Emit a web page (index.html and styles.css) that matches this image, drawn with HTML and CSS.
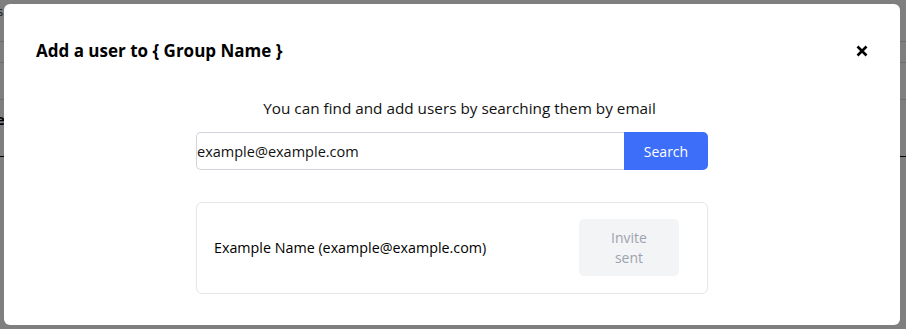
FILE: index.html
```html
<!DOCTYPE html>
<html lang="en">
<head>
<meta charset="utf-8">
<title>Add a user</title>
<link rel="stylesheet" href="styles.css">
</head>
<body>
<div class="page">
  <div class="page-top"><span class="crumb">s</span></div>
  <div class="page-row r1"></div>
  <div class="page-row r2"></div>
  <div class="page-row r3"><span class="cell-label">e</span></div>
  <div class="page-row r4"></div>
</div>
<div class="overlay">
  <div class="modal" role="dialog">
    <div class="modal-header">
      <h2 class="modal-title">Add a user to { Group Name }</h2>
      <button class="close-btn" aria-label="Close">
        <svg width="12" height="12" viewBox="0 0 12 12"><path d="M1.5 1.5 L10.5 10.5 M10.5 1.5 L1.5 10.5" stroke="#000" stroke-width="2.6" stroke-linecap="butt" fill="none"/></svg>
      </button>
    </div>
    <div class="modal-body">
      <p class="hint">You can find and add users by searching them by email</p>
      <div class="search-row">
        <input class="search-input" type="text" value="example@example.com">
        <button class="search-btn">Search</button>
      </div>
      <div class="result-card">
        <span class="result-name">Example Name (example@example.com)</span>
        <button class="invite-btn" disabled>Invite<br>sent</button>
      </div>
    </div>
  </div>
</div>
</body>
</html>
```

FILE: styles.css
```css
html, body {
  margin: 0;
  padding: 0;
  height: 100%;
}
body {
  font-family: "Open Sans", "Noto Sans", sans-serif;
  background: #ffffff;
  overflow: hidden;
}
.page {
  display: flex;
  flex-direction: column;
}
.page-top {
  height: 41px;
  border-bottom: 1px solid #d8d8d8;
  font-size: 13px;
  color: #333;
}
.crumb {
  display: block;
  margin-left: -3px;
  margin-top: 2px;
}
.page-row {
  border-bottom: 1px solid #d8d8d8;
}
.r1 { height: 20px; }
.r2 { height: 36px; }
.r3 {
  height: 56px;
  border-bottom: 1px solid #000;
  font-weight: 700;
  font-size: 15px;
  display: flex;
  align-items: center;
}
.cell-label {
  margin-left: -4px;
  color: #000;
  margin-top: -18px;
}
.r4 { height: 160px; border-bottom: none; }

.overlay {
  position: fixed;
  inset: 0;
  background: rgba(0, 0, 0, 0.5);
  padding: 4px;
}
.modal {
  background: #fff;
  border-radius: 6px;
  width: 896px;
  height: 321px;
  display: flex;
  flex-direction: column;
}
.modal-header {
  display: flex;
  align-items: center;
  justify-content: space-between;
  padding: 33px 32px 0 32px;
}
.modal-title {
  margin: 0;
  font-size: 17px;
  line-height: 28px;
  font-weight: 700;
  color: #000;
}
.close-btn {
  background: none;
  border: 0;
  padding: 0;
  width: 12px;
  height: 12px;
  display: flex;
  cursor: pointer;
}
.modal-body {
  width: 512px;
  margin: 31px auto 0;
  display: flex;
  flex-direction: column;
}
.hint {
  margin: 0 0 12px;
  text-align: center;
  font-size: 15.3px;
  line-height: 24px;
  color: #111;
  padding-left: 15px;
}
.search-row {
  display: flex;
  height: 38px;
}
.search-input {
  flex: 1;
  min-width: 0;
  border: 1px solid #d1d5db;
  border-right: 0;
  border-radius: 5px 0 0 5px;
  padding: 0;
  font-family: inherit;
  font-size: 14.5px;
  color: #111;
  outline: none;
}
.search-btn {
  width: 84px;
  border: 0;
  background: #3d6ef9;
  color: #fff;
  font-family: inherit;
  font-size: 14px;
  border-radius: 0 5px 5px 0;
}
.result-card {
  margin-top: 32px;
  border: 1px solid #e5e7eb;
  border-radius: 6px;
  padding: 16px 28px 17px 17px;
  display: flex;
  align-items: center;
  justify-content: space-between;
}
.result-name {
  font-size: 14.3px;
  color: #000;
}
.invite-btn {
  width: 100px;
  height: 57px;
  border: 0;
  border-radius: 5px;
  background: #f3f4f6;
  color: #9ca3af;
  font-family: inherit;
  font-size: 14px;
  line-height: 20px;
  padding: 0;
}
```
